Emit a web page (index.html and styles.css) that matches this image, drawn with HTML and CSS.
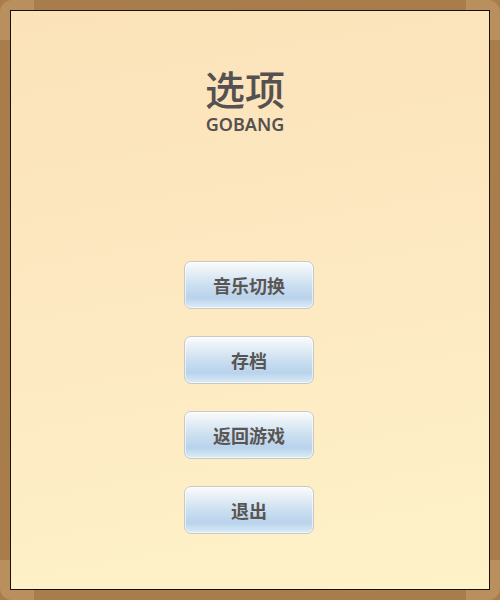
FILE: index.html
```html
<!DOCTYPE html>
<html>
<head>
<meta charset="utf-8">
<link rel="stylesheet" href="styles.css">
</head>
<body>
<div class="frame">
  <span class="corner tl"></span>
  <span class="corner tr"></span>
  <span class="corner bl"></span>
  <span class="corner br"></span>
  <div class="panel">
    <div class="title">
      <div class="title-cn">选项</div>
      <div class="title-en">GOBANG</div>
    </div>
    <div class="menu">
      <button class="btn">音乐切换</button>
      <button class="btn">存档</button>
      <button class="btn">返回游戏</button>
      <button class="btn">退出</button>
    </div>
  </div>
</div>
</body>
</html>
```
FILE: styles.css
```css
html, body {
  margin: 0;
  padding: 0;
  width: 500px;
  height: 600px;
  overflow: hidden;
}
.frame {
  position: relative;
  box-sizing: border-box;
  width: 500px;
  height: 600px;
  padding: 10px;
  background: #a97d4b;
}
.corner {
  position: absolute;
  width: 34px;
  height: 40px;
  background: #ba8f5e;
}
.corner.tl { left: 0; top: 0; border-top-left-radius: 12px; }
.corner.tr { right: 0; top: 0; border-top-right-radius: 12px; }
.corner.bl { left: 0; bottom: 0; border-bottom-left-radius: 12px; }
.corner.br { right: 0; bottom: 0; border-bottom-right-radius: 12px; }
.panel {
  position: relative;
  z-index: 1;
  box-sizing: border-box;
  height: 100%;
  border: 1.5px solid #1a1208;
  background: linear-gradient(170deg, #fbe2b9 0%, #fde9c2 50%, #fef2c9 100%);
  display: flex;
  flex-direction: column;
  align-items: center;
  font-family: "Noto Sans", "Noto Sans CJK SC", sans-serif;
  color: #555150;
}
.title {
  margin-top: 56px;
  margin-left: -10px;
  display: flex;
  flex-direction: column;
  align-items: center;
}
.title-cn {
  font-family: "Noto Sans CJK SC", sans-serif;
  font-size: 40px;
  font-weight: 500;
  line-height: 42px;
}
.title-en {
  font-family: "Noto Sans", sans-serif;
  font-size: 18px;
  font-weight: 600;
  line-height: 22px;
  margin-top: 4px;
}
.menu {
  margin-top: 126px;
  display: flex;
  flex-direction: column;
  gap: 27px;
}
.btn {
  box-sizing: border-box;
  width: 130px;
  height: 48px;
  margin-left: -2px;
  border: 1.5px solid #c9c9c4;
  border-radius: 7px;
  background: linear-gradient(180deg, #fafcfd 0%, #e6eff6 22%, #cadef0 52%, #b9d3ec 78%, #dcecf8 100%);
  box-shadow: inset 0 0 0 1px rgba(255,255,255,0.6);
  font-family: "Noto Sans CJK SC", sans-serif;
  font-size: 18px;
  font-weight: 700;
  color: #595553;
  padding: 0;
  cursor: pointer;
}
```
